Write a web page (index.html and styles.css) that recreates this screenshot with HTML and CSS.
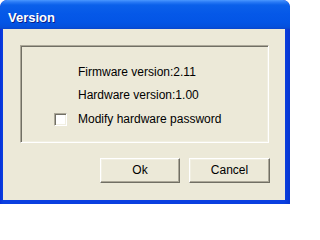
FILE: index.html
```html
<!DOCTYPE html>
<html>
<head>
<meta charset="utf-8">
<link rel="stylesheet" href="styles.css">
</head>
<body>
<div class="window">
  <div class="titlebar"><span class="title">Version</span></div>
  <div class="client">
    <div class="group">
      <div class="row row1">Firmware version:2.11</div>
      <div class="row row2">Hardware version:1.00</div>
      <div class="row row3"><span class="check"></span><span>Modify hardware password</span></div>
    </div>
    <div class="buttons">
      <div class="btn">Ok</div>
      <div class="btn">Cancel</div>
    </div>
  </div>
</div>
</body>
</html>
```
FILE: styles.css
```css
html, body { margin: 0; padding: 0; background: #fff; }
body { font-family: "Liberation Sans", Arial, sans-serif; font-size: 12px; color: #000; }
.window {
  width: 290px;
  height: 204px;
  display: flex;
  flex-direction: column;
  border-radius: 7px 7px 0 0;
  background: linear-gradient(to right, #0831d9 0, #0a3fe0 3px, #0a3fe0 284px, #0636d0 290px);
  overflow: hidden;
}
.titlebar {
  height: 29px;
  flex: none;
  box-sizing: border-box;
  padding: 10px 0 0 8px;
  background: linear-gradient(#4a98ff 0, #2a7bf6 2px, #0a60ea 5px, #0558e8 14px, #0355e6 22px, #0450dc 27px, #0a45cc 29px);
  border-radius: 7px 7px 0 0;
}
.title {
  display: block;
  color: #fff;
  font-weight: bold;
  font-size: 13px;
  line-height: 15px;
  text-shadow: 1px 1px 0 #0a1e8a;
}
.client {
  flex: 1;
  margin: 0 5px 4px 3px;
  background: #ece9d8;
  padding: 16px 0 0 17px;
}
.group {
  box-sizing: border-box;
  width: 249px;
  height: 98px;
  border: 1px solid;
  border-color: #aca899 #fff #fff #aca899;
  box-shadow: inset 1px 1px 0 #716f64, inset -1px -1px 0 #f1efe2;
  padding: 19px 0 0 57px;
}
.row { line-height: 14px; height: 14px; white-space: nowrap; }
.row1 { margin-bottom: 9px; }
.row2 { margin-bottom: 10px; }
.row3 { display: flex; align-items: center; margin-left: -24px; gap: 11px; }
.check {
  box-sizing: border-box;
  width: 13px;
  height: 13px;
  background: #fff;
  border: 1px solid;
  border-color: #aca899 #fff #fff #aca899;
  box-shadow: inset 1px 1px 0 #716f64, inset -1px -1px 0 #f1efe2;
}
.buttons {
  display: flex;
  gap: 9px;
  margin-top: 15px;
  padding-left: 80px;
}
.btn {
  box-sizing: border-box;
  width: 80px;
  height: 25px;
  line-height: 23px;
  text-align: center;
  background: #ece9d8;
  border: 1px solid;
  border-color: #fff #716f64 #716f64 #fff;
  box-shadow: inset -1px -1px 0 #aca899, inset 1px 1px 0 #f1efe2;
}
.btn + .btn { width: 81px; }
```
